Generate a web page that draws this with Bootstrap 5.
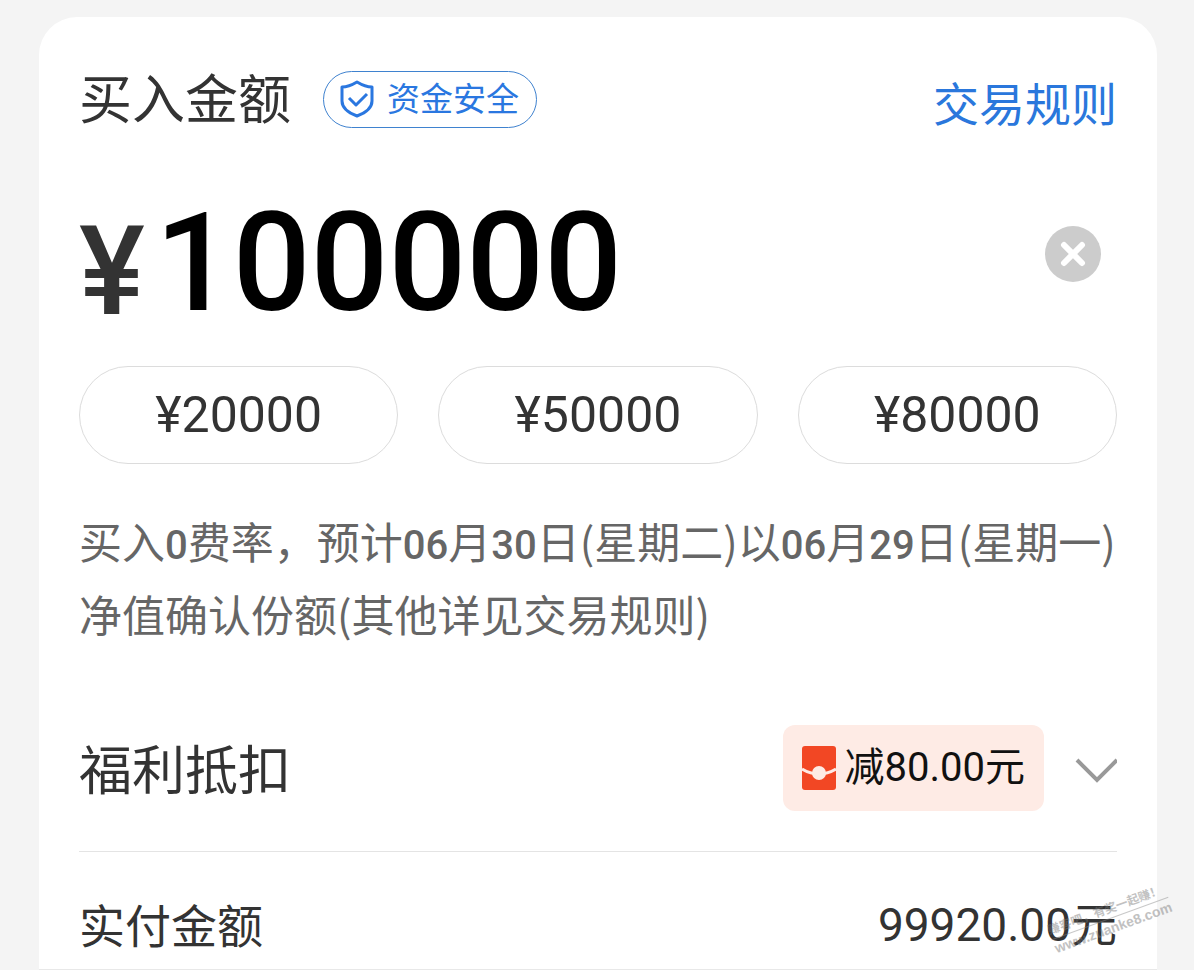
<!DOCTYPE html>
<html lang="zh-CN">
<head>
<meta charset="utf-8">
<meta name="viewport" content="width=device-width, initial-scale=1">
<title>买入金额</title>
<link href="https://cdn.jsdelivr.net/npm/bootstrap@5.3.0/dist/css/bootstrap.min.css" rel="stylesheet">
<script src="https://cdn.jsdelivr.net/npm/bootstrap@5.3.0/dist/js/bootstrap.bundle.min.js"></script>
<style>
  body { background: #f4f4f4; color: #333; font-family: "Noto Sans CJK SC", sans-serif; }
  .page { padding: 17px 37px 0 39px; }
  .buy-panel { border-radius: 38px 38px 0 0; padding: 46px 40px 0; border-bottom: 1px solid #e8e8e8; }
  .num { font-family: Roboto, "Noto Sans CJK SC", sans-serif; }
  .head-row { height: 72px; }
  .heading { font-size: 53px; line-height: 66px; padding-bottom: 6px; }
  .safe-tag { height: 57px; border: 1px solid #3f82cf; color: #2a77e0; font-size: 33px; line-height: 50px; margin-left: 32px; padding: 0 17px 0 15px; gap: 12px; }
  .safe-tag span { padding-bottom: 4px; }
  .rule-link { color: #2a77dc; font-size: 46px; line-height: 68px; padding-top: 4px; }
  .amount-row { height: 150px; margin-top: 50px; padding-right: 16px; }
  .yen { font-size: 124px; line-height: 150px; font-weight: 500; padding-top: 24px; }
  .amount-input { border: 0; outline: 0; background: none; color: #000; font-size: 137px; line-height: 150px; height: 150px; font-weight: 500; padding: 6px 0 0; min-width: 0; margin-left: 10px; }
  .clear-btn { margin-bottom: 12px; }
  .quick { height: 98px; border: 1px solid #dcdcdc; color: #333; font-size: 50px; line-height: 1; padding: 0; }
  .quick-row { gap: 40px; margin-top: 31px; }
  .note { font-size: 43px; line-height: 73px; color: #666; margin-top: 40px; padding-bottom: 2px; }
  .note .num { font-size: 40px; line-height: 1; font-weight: 500; }
  .coupon { height: 86px; border-radius: 12px; background: #feebe5; color: #111; font-size: 40px; line-height: 80px; padding: 0 19px; gap: 9px; }
  .benefit-row { margin-top: 73px; padding-bottom: 40px; border-bottom: 1px solid #e4e4e4; }
  .benefit-row .heading { padding-bottom: 2px; }
  .pay-row { height: 117px; padding-top: 28px; }
  .pay-label { font-size: 46px; line-height: 87px; }
  .pay-total { font-size: 46px; line-height: 87px; padding-top: 2px; }
  .watermark { right: -15px; bottom: 32px; color: #777; opacity: .45; font: 700 14px/18px "Liberation Sans", "Noto Sans CJK SC", sans-serif; transform: rotate(-20deg); pointer-events: none; white-space: nowrap; }
  .watermark-top { font-size: 12px; border-bottom: 1px solid #888; }
</style>
</head>
<body>
<main class="page">
  <section class="buy-panel bg-white position-relative">
    <div class="head-row d-flex align-items-center">
      <label class="heading" for="amount">买入金额</label>
      <span class="safe-tag d-inline-flex align-items-center rounded-pill">
        <svg width="36" height="38" viewBox="0 0 36 38" fill="none" stroke="#2a77e0" stroke-width="3" stroke-linejoin="round" aria-hidden="true"><path d="M18 2C13 5 8 7 3 7v14c0 8 7 12 15 15 8-3 15-7 15-15V7C28 7 23 5 18 2Z"/><path d="m10 18 7 7 11-11"/></svg>
        <span>资金安全</span>
      </span>
      <a class="rule-link ms-auto text-decoration-none" href="#">交易规则</a>
    </div>

    <div class="amount-row d-flex align-items-center">
      <span class="yen num">¥</span>
      <input class="amount-input num flex-grow-1" id="amount" type="text" inputmode="numeric" value="100000">
      <button class="clear-btn btn border-0 p-0 d-flex" type="button" aria-label="清除">
        <svg width="56" height="56" viewBox="0 0 56 56" aria-hidden="true"><circle cx="28" cy="28" r="28" fill="#ccc"/><path d="m19 19 18 18M37 19 19 37" stroke="#fff" stroke-width="6" stroke-linecap="round"/></svg>
      </button>
    </div>

    <div class="quick-row d-flex">
      <button class="quick num btn rounded-pill flex-fill" type="button">¥20000</button>
      <button class="quick num btn rounded-pill flex-fill" type="button">¥50000</button>
      <button class="quick num btn rounded-pill flex-fill" type="button">¥80000</button>
    </div>

    <p class="note mb-0">买入<span class="num">0</span>费率，预计<span class="num">06</span>月<span class="num">30</span>日(星期二)以<span class="num">06</span>月<span class="num">29</span>日(星期一)净值确认份额(其他详见交易规则)</p>

    <div class="benefit-row d-flex align-items-center">
      <span class="heading">福利抵扣</span>
      <span class="coupon d-inline-flex align-items-center ms-auto">
        <svg width="34" height="44" viewBox="0 0 34 44" aria-hidden="true"><rect width="34" height="44" rx="3" fill="#f24724"/><path d="M0 23q8 5 17 5t17-5" fill="none" stroke="#feebe5" stroke-width="3"/><circle cx="17" cy="27" r="7" fill="#feebe5"/></svg>
        <span class="num">减80.00元</span>
      </span>
      <button class="btn border-0 p-0 d-flex ms-4" type="button" aria-label="展开">
        <svg width="49" height="30" viewBox="0 0 49 30" fill="none" stroke="#999" stroke-width="4" aria-hidden="true"><path d="m9 7 20 20L49 7"/></svg>
      </button>
    </div>

    <div class="pay-row d-flex justify-content-between">
      <span class="pay-label">实付金额</span>
      <span class="pay-total num">99920.00元</span>
    </div>

    <div class="watermark position-absolute" aria-hidden="true">
      <div class="watermark-top">赚客吧，有奖一起赚！</div>
      <div>www.zuanke8.com</div>
    </div>
  </section>
</main>
</body>
</html>
